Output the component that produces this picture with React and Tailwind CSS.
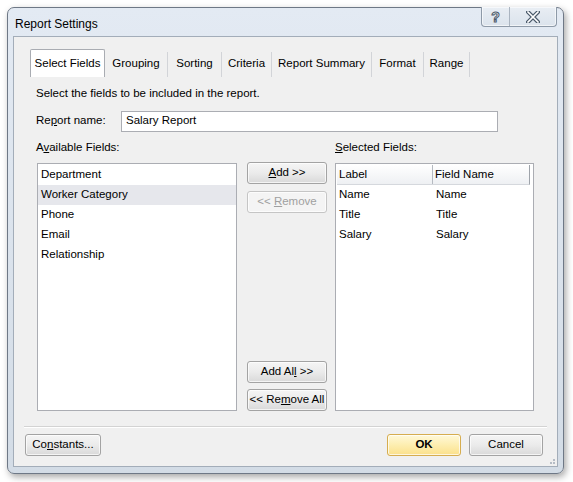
import clsx from "clsx";

const tabs = [
  { name: "Select Fields", w: "w-[75px]", active: true },
  { name: "Grouping", w: "w-[63px]" },
  { name: "Sorting", w: "w-[54px]" },
  { name: "Criteria", w: "w-[50px]" },
  { name: "Report Summary", w: "w-[100px]" },
  { name: "Format", w: "w-[52px]" },
  { name: "Range", w: "w-[46px]" },
];

const available = ["Department", "Worker Category", "Phone", "Email", "Relationship"];
const selected = [
  { label: "Name", field: "Name" },
  { label: "Title", field: "Title" },
  { label: "Salary", field: "Salary" },
];

function Btn({ children, className = "", disabled, primary }) {
  return (
    <div
      className={clsx(
        "h-[22px] flex items-center justify-center rounded-[3px] border shadow-[inset_0_0_0_1px_rgba(255,255,255,0.7)]",
        disabled
          ? "border-[#c5c5c5] bg-[#f4f4f4] text-[#a0a0a0]"
          : primary
          ? "border-[#d6ad4f] bg-gradient-to-b from-[#fff8d8] via-[#fdeeb0] to-[#fbe08a] text-black font-bold"
          : "border-[#a3a3a3] bg-gradient-to-b from-[#f5f5f5] via-[#ebebeb] to-[#d9d9d9] text-black",
        className
      )}
    >
      <span className="whitespace-pre">{children}</span>
    </div>
  );
}

export default function App() {
  return (
    <div
      className="w-[573px] h-[482px] bg-white pt-[7px] pl-[7px] text-[11.5px] text-black"
      style={{ fontFamily: '"Liberation Sans", Arial, sans-serif' }}
    >
      <div className="w-[557px] h-[467px] rounded-[7px] border border-[#6e7886] bg-gradient-to-b from-[#e3eaf3] to-[#d3dce6] shadow-[2px_3px_7px_rgba(0,0,0,0.35)] flex flex-col">
        {/* title bar */}
        <div className="h-[28px] flex items-start relative">
          <div className="pl-[7px] pt-[7px] text-[12px] text-black">Report Settings</div>
          <div className="absolute right-[6px] top-[-1px] flex h-[20px] rounded-b-[4px] border border-t-0 border-[#8e9aa8] bg-gradient-to-b from-[#e9eef4] to-[#dbe3ec] shadow-[inset_0_0_0_1px_rgba(255,255,255,0.6)]">
            <div className="w-[28px] flex items-center justify-center border-r border-[#aab4c0]">
              <span className="text-[14px] font-bold text-white [-webkit-text-stroke:1px_#4b5a6b] leading-none">?</span>
            </div>
            <div className="w-[46px] flex items-center justify-center">
              <svg width="14" height="12" viewBox="0 0 14 12">
                <path d="M2 1 L12 11 M12 1 L2 11" stroke="#4b5a6b" strokeWidth="4" strokeLinecap="square" />
                <path d="M2 1 L12 11 M12 1 L2 11" stroke="#ffffff" strokeWidth="1.6" strokeLinecap="square" />
              </svg>
            </div>
          </div>
        </div>

        {/* client area */}
        <div className="mx-[5px] mb-[6px] flex-1 border border-[#a3adb9] bg-[#f0f0f0] flex flex-col">
          {/* tabs */}
          <div className="mt-[12px] pl-[16px] flex items-end h-[28px]">
            {tabs.map((t) =>
              t.active ? (
                <div
                  key={t.name}
                  className={clsx(
                    t.w,
                    "h-[28px] flex items-center justify-center bg-white border border-b-0 border-[#a9acb2] rounded-t-[2px]"
                  )}
                >
                  {t.name}
                </div>
              ) : (
                <div
                  key={t.name}
                  className={clsx(
                    t.w,
                    "h-[25px] flex items-center justify-center pb-[2px] border-r border-[#d2d4d8]"
                  )}
                >
                  {t.name}
                </div>
              )
            )}
          </div>

          <div className="pl-[22px] pr-[22px]">
            <div className="mt-[8px] h-[16px] leading-[16px]">Select the fields to be included in the report.</div>

            <div className="mt-[9px] flex items-center h-[22px]">
              <div className="w-[85px]">
                Re<span className="underline">p</span>ort name:
              </div>
              <div className="w-[377px] h-[21px] border border-[#abadb3] bg-white flex items-center pl-[4px]">
                Salary Report
              </div>
            </div>

            <div className="mt-[7px] h-[16px] flex leading-[16px]">
              <div className="w-[299px]">
                A<span className="underline">v</span>ailable Fields:
              </div>
              <div>
                <span className="underline">S</span>elected Fields:
              </div>
            </div>

            <div className="mt-[8px] flex h-[248px] pl-[1px]">
              <div className="w-[200px] h-full border border-[#abadb3] bg-white py-[1px]">
                {available.map((a) => (
                  <div
                    key={a}
                    className={clsx(
                      "h-[20px] flex items-center pl-[3px]",
                      a === "Worker Category" && "bg-[#e6e7ec]"
                    )}
                  >
                    {a}
                  </div>
                ))}
              </div>

              <div className="ml-[10px] w-[80px] flex flex-col justify-between">
                <div className="flex flex-col gap-[7px] -mt-[1px]">
                  <Btn>
                    <span className="underline">A</span>dd &gt;&gt;
                  </Btn>
                  <Btn disabled>
                    &lt;&lt; <span className="underline">R</span>emove
                  </Btn>
                </div>
                <div className="flex flex-col gap-[6px]">
                  <Btn>
                    Add Al<span className="underline">l</span> &gt;&gt;
                  </Btn>
                  <Btn>
                    &lt;&lt; Re<span className="underline">m</span>ove All
                  </Btn>
                </div>
              </div>

              <div className="ml-[8px] w-[199px] h-full border border-[#abadb3] bg-white p-[1px]">
                <div className="mr-[2px] h-[20px] flex bg-gradient-to-b from-white to-[#eef0f3] border-b border-[#d5d8dd] border-r border-r-[#9ea3aa]">
                  <div className="w-[96px] pl-[2px] flex items-center border-r border-[#b5bac1]">Label</div>
                  <div className="pl-[2px] flex items-center">Field Name</div>
                </div>
                {selected.map((s) => (
                  <div key={s.label} className="h-[20px] flex items-center">
                    <div className="w-[96px] pl-[2px]">{s.label}</div>
                    <div className="pl-[3px]">{s.field}</div>
                  </div>
                ))}
              </div>
            </div>
          </div>

          <div className="mt-[15px] mx-[10px] h-[2px] border-t border-[#d3d3d3] border-b border-b-white" />

          <div className="mt-[6px] pl-[11px] pr-[14px] flex items-center">
            <Btn className="w-[76px]">
              Co<span className="underline">n</span>stants...
            </Btn>
            <div className="flex-1" />
            <Btn primary className="w-[74px]">OK</Btn>
            <Btn className="w-[74px] ml-[8px]">Cancel</Btn>
          </div>
          <div className="flex-1 flex justify-end items-end pr-[2px] pb-[2px]">
            <div className="grid grid-cols-3 gap-[1px] w-[8px]">
              <span />
              <span />
              <span className="w-[2px] h-[2px] bg-[#b5bcc5]" />
              <span />
              <span className="w-[2px] h-[2px] bg-[#b5bcc5]" />
              <span className="w-[2px] h-[2px] bg-[#b5bcc5]" />
            </div>
          </div>
        </div>
      </div>
    </div>
  );
}
